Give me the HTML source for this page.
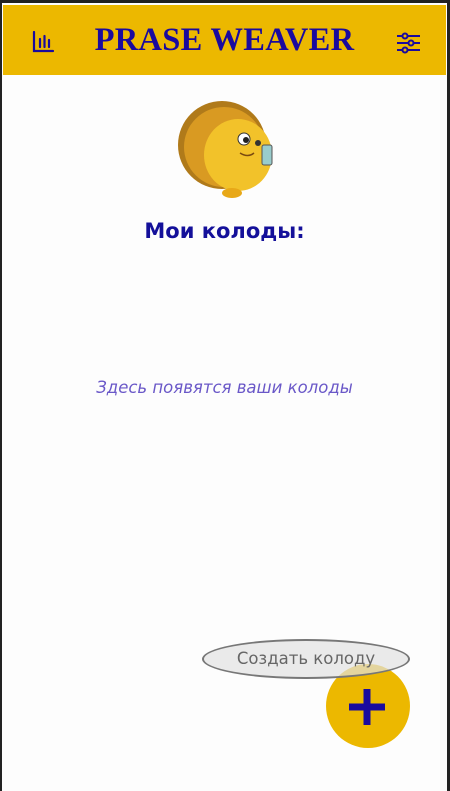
<!DOCTYPE html>
<html><head><meta charset="utf-8"><style>
html,body{margin:0;padding:0;width:450px;height:791px;overflow:hidden;background:#222;}
.frame{position:absolute;left:2px;top:3px;width:445px;height:788px;background:#fdfdfd;}
.header{position:absolute;left:1px;top:2px;width:443px;height:70px;background:#ECB800;}
.title{position:absolute;left:0;right:0;top:17px;text-align:center;font-family:"Liberation Serif",serif;font-weight:bold;font-size:32.5px;color:#1a0a9e;letter-spacing:0.3px;}
.h2{position:absolute;left:0;right:0;top:216px;text-align:center;font-family:"DejaVu Sans","Liberation Sans",sans-serif;font-weight:bold;font-size:21px;color:#14109a;}
.empty{position:absolute;left:0;right:0;top:375px;text-align:center;font-family:"DejaVu Sans","Liberation Sans",sans-serif;font-style:italic;font-size:16.5px;color:#6a58c8;}
.fab{position:absolute;left:324px;top:661px;width:84px;height:84px;border-radius:50%;background:#ECB800;}
.pill{position:absolute;left:200px;top:636px;width:204px;height:36px;border:2px solid #777;border-radius:50%;background:rgba(225,225,225,0.7);font-family:"DejaVu Sans","Liberation Sans",sans-serif;font-size:16.5px;color:#666;text-align:center;line-height:36px;}
</style></head><body>
<div class="frame">
<div class="header">
<svg style="position:absolute;left:29px;top:26px" width="24" height="22" viewBox="0 0 24 22" fill="none" stroke="#1a0a9e" stroke-width="2.2" stroke-linecap="round"><path d="M2 1V20H21"/><path d="M8 8V16M12.5 5V16M17 9V16"/></svg>
<div class="title">PRASE WEAVER</div>
<svg style="position:absolute;left:393px;top:26px" width="24" height="24" viewBox="0 0 24 24" fill="none" stroke="#1a0a9e" stroke-width="2"><path d="M1 5H24M1 12H24M1 19H24" /><circle cx="9" cy="5" r="2.5" fill="#ECB800"/><circle cx="15" cy="12" r="2.5" fill="#ECB800"/><circle cx="9" cy="19" r="2.5" fill="#ECB800"/></svg>
</div>
<svg style="position:absolute;left:170px;top:92px" width="110" height="110" viewBox="0 0 110 110">
<circle cx="50" cy="50" r="44" fill="#b07a1a"/>
<circle cx="52" cy="52" r="40" fill="#d99a22"/>
<ellipse cx="66" cy="60" rx="34" ry="36" fill="#f2c22a"/>
<ellipse cx="60" cy="98" rx="10" ry="5" fill="#e8a818"/>
<circle cx="72" cy="44" r="6" fill="#fff" stroke="#333"/><circle cx="74" cy="45" r="3" fill="#222"/>
<circle cx="86" cy="48" r="3" fill="#333"/>
<path d="M68 58q8 5 14 0" stroke="#7a4a10" fill="none" stroke-width="1.5"/>
<rect x="90" y="50" width="10" height="20" rx="2" fill="#9cc" stroke="#555"/>
</svg>
<div class="h2">Мои колоды:</div>
<div class="empty">Здесь появятся ваши колоды</div>
<div class="fab"></div>
<svg style="position:absolute;left:347px;top:686px" width="36" height="36" viewBox="0 0 36 36"><rect x="0" y="14.5" width="36" height="7" fill="#1a0a9e"/><rect x="14.5" y="0" width="7" height="36" fill="#1a0a9e"/></svg>
<div class="pill">Создать колоду</div>
</div>
</body></html>
